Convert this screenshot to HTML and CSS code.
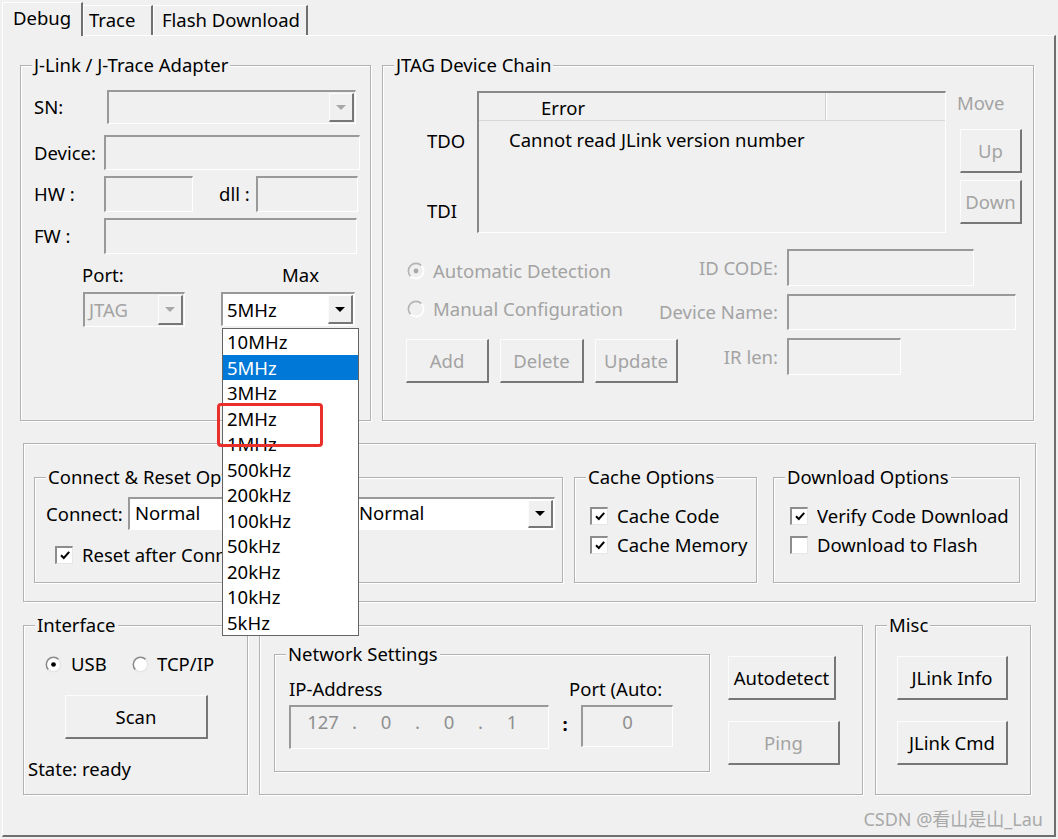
FILE: index.html
```html
<!DOCTYPE html>
<html>
<head>
<meta charset="utf-8">
<title>J-Link Debug Settings</title>
<link rel="stylesheet" href="styles.css">
</head>
<body>
<div class="tabs">
  <div class="tab tab-debug active">Debug</div>
  <div class="tab tab-trace">Trace</div>
  <div class="tab tab-flash">Flash Download</div>
</div>

<div class="panel">
  <div class="row1">
    <div class="group g-adapter">
      <span class="legend">J-Link / J-Trace Adapter</span>
      <div class="arow r-sn">
        <span class="lbl w73">SN:</span>
        <div class="combo sunken dis w249"><span class="val"></span><span class="drop raised"><i class="tri grey"></i></span></div>
      </div>
      <div class="arow r-dev">
        <span class="lbl w70">Device:</span>
        <div class="edit sunken w256"></div>
      </div>
      <div class="arow r-hw">
        <span class="lbl w70">HW :</span>
        <div class="edit sunken w89"></div>
        <span class="lbl dll">dll :</span>
        <div class="edit sunken w102"></div>
      </div>
      <div class="arow r-fw">
        <span class="lbl w70">FW :</span>
        <div class="edit sunken w253"></div>
      </div>
      <div class="portmax">
        <div class="pm-col port-col">
          <span class="pm-lbl">Port:</span>
          <div class="combo sunken dis pm-port"><span class="val grey-t">JTAG</span><span class="drop raised"><i class="tri grey"></i></span></div>
        </div>
        <div class="pm-col max-col">
          <span class="pm-lbl pm-right">Max</span>
          <div class="combo sunken white pm-max"><span class="val">5MHz</span><span class="drop raised"><i class="tri"></i></span></div>
        </div>
      </div>
    </div>

    <div class="group g-jtag">
      <span class="legend">JTAG Device Chain</span>
      <div class="jt-top">
        <div class="jt-labels"><span class="tdo">TDO</span><span class="tdi">TDI</span></div>
        <div class="jt-table sunken">
          <div class="jt-head"><span class="jh1">Error</span><span class="jh2"></span></div>
          <div class="jt-body">Cannot read JLink version number</div>
        </div>
        <div class="jt-move">
          <span class="move">Move</span>
          <div class="btn raised dis b-up">Up</div>
          <div class="btn raised dis b-down">Down</div>
        </div>
      </div>
      <div class="jt-bottom">
        <div class="jt-left">
          <div class="radio-row dis">
            <svg class="rad" viewBox="0 0 18 18"><circle cx="9" cy="9" r="7" fill="#f0f0f0"/><path d="M3.6 14.4A7.5 7.5 0 0 1 14.4 3.6" stroke="#b4b4b4" stroke-width="1.6" fill="none"/><path d="M14.4 3.6A7.5 7.5 0 0 1 3.6 14.4" stroke="#ffffff" stroke-width="1.6" fill="none"/><circle cx="9" cy="9" r="2.4" fill="#a8a8a8"/></svg>
            <span>Automatic Detection</span>
          </div>
          <div class="radio-row dis">
            <svg class="rad" viewBox="0 0 18 18"><circle cx="9" cy="9" r="7" fill="#f0f0f0"/><path d="M3.6 14.4A7.5 7.5 0 0 1 14.4 3.6" stroke="#b4b4b4" stroke-width="1.6" fill="none"/><path d="M14.4 3.6A7.5 7.5 0 0 1 3.6 14.4" stroke="#ffffff" stroke-width="1.6" fill="none"/></svg>
            <span>Manual Configuration</span>
          </div>
          <div class="btn-row">
            <div class="btn raised dis b-add">Add</div>
            <div class="btn raised dis b-del">Delete</div>
            <div class="btn raised dis b-upd">Update</div>
          </div>
        </div>
        <div class="jt-right">
          <span class="rl">ID CODE:</span><div class="edit sunken e-id"></div>
          <span class="rl">Device Name:</span><div class="edit sunken e-dn"></div>
          <span class="rl">IR len:</span><div class="edit sunken e-ir"></div>
        </div>
      </div>
    </div>
  </div>

  <div class="group g-big">
    <div class="group g-cr">
      <span class="legend cr-legend">Connect &amp; Reset Options</span>
      <div class="cr-row">
        <span class="lbl cr-lbl">Connect:</span>
        <div class="combo sunken white cr-c1"><span class="val">Normal</span><span class="drop raised"><i class="tri"></i></span></div>
        <span class="cr-gap"></span>
        <div class="combo sunken white cr-c2"><span class="val">Normal</span><span class="drop raised"><i class="tri"></i></span></div>
      </div>
      <div class="chk-row cr-chk">
        <span class="chk"><svg viewBox="0 0 12 12"><path d="M2 6.2L4.8 9L10.2 2.8" stroke="#000" stroke-width="2" fill="none"/></svg></span>
        <span class="cr-text">Reset after Connect</span>
      </div>
    </div>
    <div class="group g-cache">
      <span class="legend">Cache Options</span>
      <div class="chk-row">
        <span class="chk"><svg viewBox="0 0 12 12"><path d="M2 6.2L4.8 9L10.2 2.8" stroke="#000" stroke-width="2" fill="none"/></svg></span>
        <span>Cache Code</span>
      </div>
      <div class="chk-row">
        <span class="chk"><svg viewBox="0 0 12 12"><path d="M2 6.2L4.8 9L10.2 2.8" stroke="#000" stroke-width="2" fill="none"/></svg></span>
        <span>Cache Memory</span>
      </div>
    </div>
    <div class="group g-dl">
      <span class="legend">Download Options</span>
      <div class="chk-row">
        <span class="chk"><svg viewBox="0 0 12 12"><path d="M2 6.2L4.8 9L10.2 2.8" stroke="#000" stroke-width="2" fill="none"/></svg></span>
        <span class="clip">Verify Code Download</span>
      </div>
      <div class="chk-row">
        <span class="chk"></span>
        <span>Download to Flash</span>
      </div>
    </div>
  </div>

  <div class="row3">
    <div class="group g-iface">
      <span class="legend">Interface</span>
      <div class="if-radios">
        <svg class="rad" viewBox="0 0 18 18"><circle cx="9" cy="9" r="7" fill="#fff"/><path d="M3.6 14.4A7.5 7.5 0 0 1 14.4 3.6" stroke="#8a8a8a" stroke-width="1.6" fill="none"/><path d="M14.4 3.6A7.5 7.5 0 0 1 3.6 14.4" stroke="#e6e6e6" stroke-width="1.6" fill="none"/><circle cx="9" cy="9" r="2.5" fill="#000"/></svg>
        <span class="r-usb">USB</span>
        <svg class="rad" viewBox="0 0 18 18"><circle cx="9" cy="9" r="7" fill="#fff"/><path d="M3.6 14.4A7.5 7.5 0 0 1 14.4 3.6" stroke="#8a8a8a" stroke-width="1.6" fill="none"/><path d="M14.4 3.6A7.5 7.5 0 0 1 3.6 14.4" stroke="#e6e6e6" stroke-width="1.6" fill="none"/></svg>
        <span class="r-tcp">TCP/IP</span>
      </div>
      <div class="btn raised b-scan">Scan</div>
      <div class="state">State: ready</div>
    </div>

    <div class="group g-net">
      <div class="group g-ns">
        <span class="legend">Network Settings</span>
        <div class="ns-labels"><span class="ip-lbl">IP-Address</span><span class="port-lbl">Port (Auto:</span></div>
        <div class="ns-inputs">
          <div class="edit sunken ip-edit">
            <span class="oct">127</span><span class="dot">.</span><span class="oct">0</span><span class="dot">.</span><span class="oct">0</span><span class="dot">.</span><span class="oct">1</span>
          </div>
          <span class="colon">:</span>
          <div class="edit sunken port-edit">0</div>
        </div>
      </div>
      <div class="net-btns">
        <div class="btn raised b-auto">Autodetect</div>
        <div class="btn raised dis b-ping">Ping</div>
      </div>
    </div>

    <div class="group g-misc">
      <span class="legend">Misc</span>
      <div class="btn raised b-misc b-info">JLink Info</div>
      <div class="btn raised b-misc b-cmd">JLink Cmd</div>
    </div>
  </div>

  <div class="watermark">CSDN @看山是山_Lau</div>
</div>

<div class="droplist">
  <div class="opt">10MHz</div>
  <div class="opt sel">5MHz</div>
  <div class="opt">3MHz</div>
  <div class="opt">2MHz</div>
  <div class="opt">1MHz</div>
  <div class="opt">500kHz</div>
  <div class="opt">200kHz</div>
  <div class="opt">100kHz</div>
  <div class="opt">50kHz</div>
  <div class="opt">20kHz</div>
  <div class="opt">10kHz</div>
  <div class="opt">5kHz</div>
</div>
<div class="mark"></div>
</body>
</html>
```

FILE: styles.css
```css
* { box-sizing: border-box; }
html, body { margin: 0; padding: 0; }
body {
  width: 1058px;
  height: 839px;
  overflow: hidden;
  background: #f0f0f0;
  font-family: "Noto Sans", "Open Sans", sans-serif;
  font-size: 18.5px;
  line-height: 20px;
  color: #000;
  position: relative;
}

/* ---------- tabs ---------- */
.tabs {
  display: flex;
  align-items: flex-end;
  height: 35px;
  padding-left: 2px;
  position: relative;
  z-index: 2;
}
.tab {
  height: 30px;
  border-style: solid;
  border-width: 1px 2px 0 1px;
  border-color: #fff #6f6f6f transparent #fff;
  line-height: 28px;
  white-space: nowrap;
  background: #f0f0f0;
}
.tab-debug { width: 81px; padding-left: 10px; height: 34px; margin-bottom: -1px; line-height: 30px; }
.tab-trace { width: 70px; padding-left: 5px; }
.tab-flash { width: 155px; padding-left: 8px; }

/* ---------- panel ---------- */
.panel {
  margin-left: 2px;
  width: 1054px;
  height: 802px;
  border-style: solid;
  border-width: 1px 2px 2px 1px;
  border-color: #fff #6f6f6f #6f6f6f #fff;
  padding: 29px 0 0 17px;
}

/* ---------- generic controls ---------- */
.group {
  position: relative;
  border: 1px solid #b2b2b2;
  box-shadow: inset 1px 1px 0 #fff, 1px 1px 0 #fff;
}
.legend {
  position: absolute;
  top: -11px;
  left: 11px;
  padding: 0 2px;
  background: #f0f0f0;
  line-height: 20px;
  white-space: nowrap;
}
.sunken {
  border-style: solid;
  border-width: 2px 1px 1px 2px;
  border-color: #999 #fff #fff #999;
  background: #f0f0f0;
}
.raised {
  border-style: solid;
  border-width: 1px 2px 2px 1px;
  border-color: #fcfcfc #777 #777 #fcfcfc;
  background: #f0f0f0;
}
.btn {
  display: flex;
  align-items: center;
  justify-content: center;
  white-space: nowrap;
}
.dis { color: #a3a3a3; }
.grey-t { color: #a3a3a3; }
.lbl { white-space: nowrap; }

.combo { display: flex; align-items: stretch; }
.combo.white { background: #fff; }
.combo .val { flex: 1; padding-left: 4px; display: flex; align-items: center; white-space: nowrap; overflow: hidden; }
.combo .drop {
  width: 25px;
  margin: 1px 1px 1px 0;
  display: flex;
  align-items: center;
  justify-content: center;
}
.tri {
  width: 0;
  height: 0;
  border-left: 5px solid transparent;
  border-right: 5px solid transparent;
  border-top: 5px solid #000;
}
.tri.grey { border-top-color: #a8a8a8; }

.chk {
  width: 18px;
  height: 18px;
  flex: none;
  background: #fff;
  border-style: solid;
  border-width: 2px 1px 1px 2px;
  border-color: #8d8d8d #e6e6e6 #e6e6e6 #8d8d8d;
  display: flex;
  align-items: center;
  justify-content: center;
}
.chk svg { width: 12px; height: 12px; }
.chk-row { display: flex; align-items: center; gap: 9px; height: 29px; white-space: nowrap; }
.rad { width: 18px; height: 18px; flex: none; }

/* ---------- row 1 ---------- */
.row1 { display: flex; gap: 11px; }

.g-adapter { width: 351px; height: 356px; padding: 24px 0 0 13px; }
.arow { display: flex; align-items: center; }
.r-sn { height: 34px; }
.r-dev { height: 35px; margin-top: 11px; }
.r-hw { height: 36px; margin-top: 6px; }
.r-fw { height: 36px; margin-top: 6px; }
.arow > .edit, .arow > .combo { align-self: stretch; }
.w73 { width: 73px; }
.w70 { width: 70px; }
.w249 { width: 249px; }
.w256 { width: 256px; }
.w89 { width: 89px; }
.w102 { width: 102px; }
.w253 { width: 253px; }
.dll { width: 63px; padding-left: 26px; }

.portmax { display: flex; margin-top: 11px; }
.pm-col { display: flex; flex-direction: column; }
.port-col { margin-left: 48px; width: 103px; }
.max-col { margin-left: 36px; width: 134px; }
.pm-lbl { height: 20px; }
.pm-right { text-align: right; padding-right: 36px; }
.pm-port { margin-top: 7px; height: 35px; margin-left: 1px; }
.pm-max { margin-top: 7px; height: 34px; }

.g-jtag { width: 652px; height: 356px; padding: 25px 0 0 0; }
.jt-top { display: flex; }
.jt-labels { width: 94px; display: flex; flex-direction: column; padding-left: 44px; padding-top: 40px; }
.tdi { margin-top: 50px; }
.jt-table {
  width: 469px;
  height: 142px;
  border-color: #888 #fff #fff #888;
}
.jt-head { display: flex; height: 28px; border-bottom: 1px solid #d8d8d8; }
.jh1 { width: 347px; padding-left: 62px; line-height: 30px; border-right: 1px solid #d0d0d0; box-shadow: 1px 0 0 #fff; }
.jh2 { flex: 1; }
.jt-body { padding: 9px 0 0 30px; white-space: nowrap; }
.jt-move { display: flex; flex-direction: column; margin-left: 11px; padding-top: 2px; }
.move { color: #a3a3a3; }
.b-up { width: 62px; height: 44px; margin: 16px 0 0 3px; }
.b-down { width: 62px; height: 44px; margin: 7px 0 0 3px; }

.jt-bottom { display: flex; margin-top: 16px; }
.jt-left { margin-left: 23px; width: 244px; padding-top: 3px; }
.radio-row { display: flex; align-items: center; height: 38px; gap: 8px; white-space: nowrap; }
.radio-row .rad { margin-left: 1px; }
.btn-row { display: flex; gap: 11px; margin-top: 11px; width: 272px; }
.b-add, .b-upd { width: 83px; height: 44px; flex: none; }
.b-del { width: 84px; height: 44px; flex: none; }
.jt-right {
  display: grid;
  grid-template-columns: 128px auto;
  grid-template-rows: 37px 36px 37px;
  row-gap: 8px;
  column-gap: 9px;
  align-items: center;
  color: #a3a3a3;
}
.rl { text-align: right; white-space: nowrap; }
.jt-right .edit { height: 100%; }
.e-id { width: 187px; }
.e-dn { width: 229px; }
.e-ir { width: 114px; }

/* ---------- big group ---------- */
.g-big {
  margin: 22px 0 0 3px;
  width: 1013px;
  height: 159px;
  padding: 33px 0 0 10px;
  display: flex;
  align-items: flex-start;
}
.g-cr { width: 529px; height: 106px; padding: 19px 0 0 11px; }
.g-cache { width: 183px; height: 106px; margin-left: 11px; padding: 23px 0 0 15px; }
.g-dl { width: 247px; height: 106px; margin-left: 16px; padding: 23px 0 0 16px; }
.cr-legend { max-width: 177px; overflow: hidden; }
.cr-row { display: flex; height: 33px; }
.cr-lbl { width: 82px; display: flex; align-items: center; }
.cr-c1 { width: 127px; }
.cr-gap { width: 97px; }
.cr-c2 { width: 203px; }
.cr-c1 .val, .cr-c2 .val { padding-left: 5px; align-items: flex-start; padding-top: 4px; }
.cr-chk { margin: 10px 0 0 9px; }
.cr-text { width: 140px; overflow: hidden; }
.clip { width: 194px; overflow: hidden; }

/* ---------- row 3 ---------- */
.row3 { display: flex; margin: 23px 0 0 3px; align-items: flex-start; }
.g-iface { width: 225px; height: 170px; padding: 28px 0 0 4px; }
.if-radios { display: flex; align-items: center; height: 20px; margin-left: 17px; }
.if-radios .rad { width: 17px; height: 17px; }
.r-usb { margin-left: 9px; width: 61px; }
.r-tcp { margin-left: 8px; }
.b-scan { width: 143px; height: 44px; margin: 21px 0 0 37px; }
.state { margin-top: 20px; }

.g-net { width: 604px; height: 170px; margin-left: 11px; display: flex; align-items: flex-start; }
.g-ns { width: 436px; height: 118px; margin: 28px 0 0 14px; padding: 24px 0 0 14px; }
.ns-labels { display: flex; height: 20px; }
.ip-lbl { width: 93px; overflow: hidden; white-space: nowrap; }
.port-lbl { margin-left: 187px; white-space: nowrap; }
.ns-inputs { display: flex; align-items: flex-start; margin-top: 6px; }
.ip-edit { width: 260px; height: 44px; display: flex; padding: 5px 0 0 8px; color: #8f8f8f; }
.oct { width: 48px; text-align: center; }
.dot { width: 15px; text-align: center; }
.colon { width: 32px; text-align: center; padding-top: 9px; font-weight: bold; }
.port-edit { width: 92px; height: 42px; text-align: center; padding-top: 5px; color: #8f8f8f; }
.net-btns { display: flex; flex-direction: column; margin-left: 18px; }
.b-auto { width: 108px; height: 44px; margin-top: 30px; }
.b-ping { width: 112px; height: 44px; margin-top: 21px; }

.g-misc { width: 156px; height: 170px; margin-left: 12px; padding: 30px 0 0 21px; }
.b-misc { width: 111px; height: 44px; }
.b-cmd { margin-top: 21px; }

.watermark {
  margin-top: 14px;
  padding-right: 11px;
  text-align: right;
  font-family: "Noto Sans", "Noto Sans CJK SC", sans-serif;
  font-size: 18px;
  color: #a9a9a9;
}

/* ---------- open dropdown ---------- */
.droplist {
  position: absolute;
  left: 222px;
  top: 328px;
  width: 137px;
  border: 1px solid #646464;
  background: #fff;
  z-index: 5;
}
.opt { height: 25.5px; line-height: 25.5px; padding-left: 4px; white-space: nowrap; }
.opt.sel { background: #0078d7; color: #fff; }
.mark {
  position: absolute;
  left: 217px;
  top: 403px;
  width: 106px;
  height: 44px;
  border: 3px solid #ea2f2a;
  border-radius: 4px;
  z-index: 6;
}
```
